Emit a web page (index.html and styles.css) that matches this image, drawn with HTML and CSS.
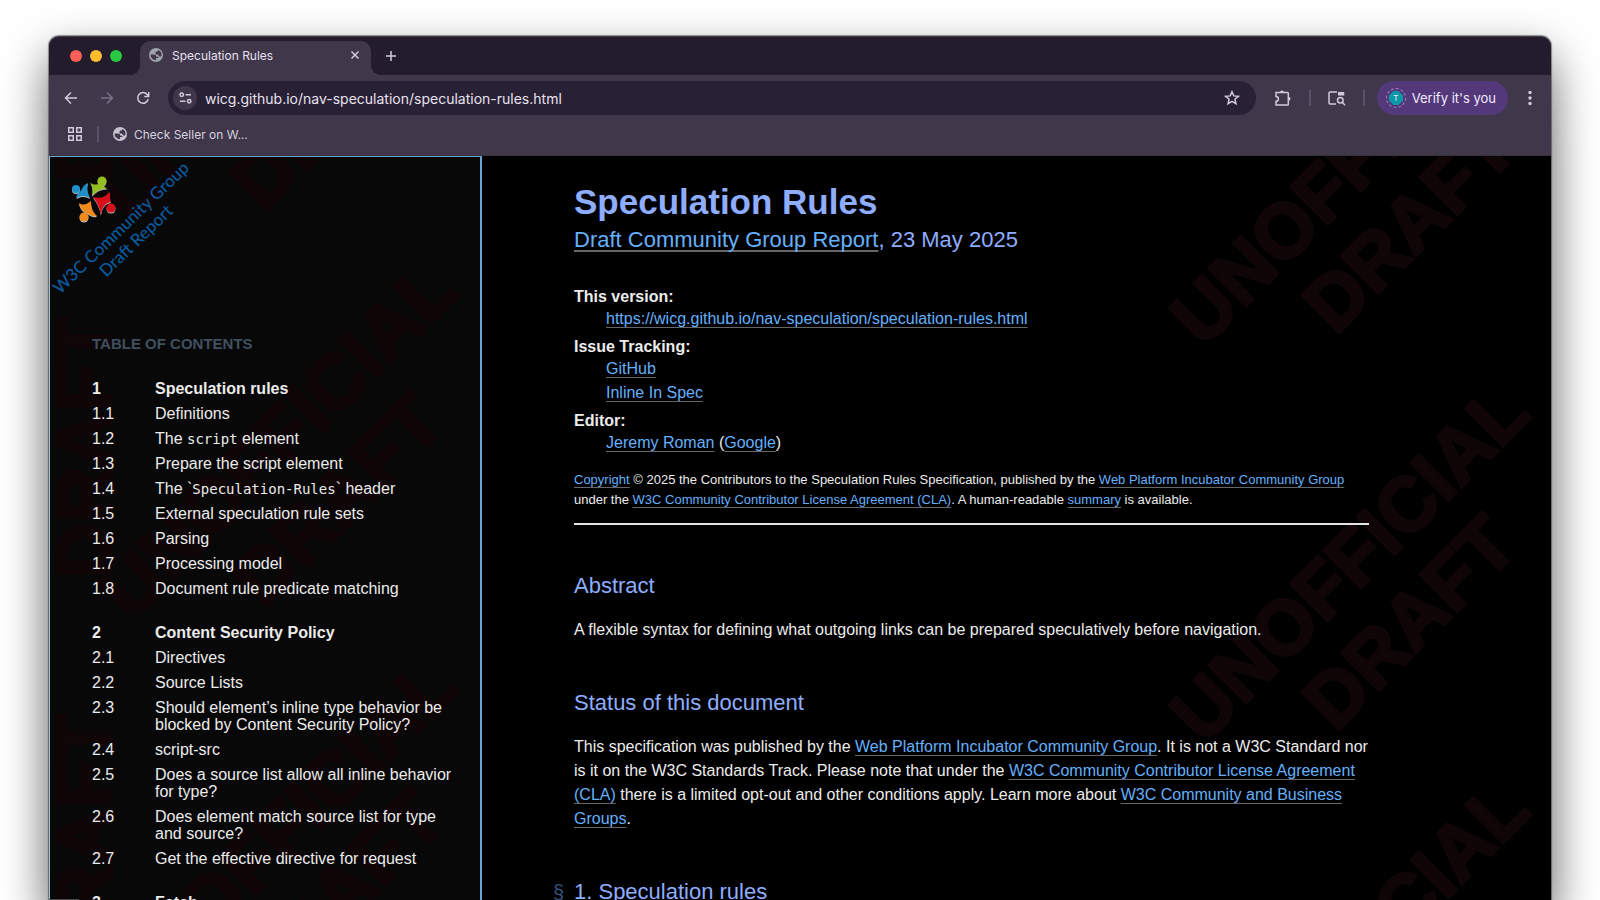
FILE: index.html
```html
<!DOCTYPE html>
<html lang="en">
<head>
<meta charset="utf-8">
<title>Speculation Rules</title>
<meta name="viewport" content="width=device-width, initial-scale=1">
<link rel="stylesheet" href="styles.css">
</head>
<body>
<svg class="defs" aria-hidden="true">
  <symbol id="globe" viewBox="0 0 20 20">
    <path fill-rule="evenodd" d="M10 0a10 10 0 1 0 0 20 10 10 0 0 0 0-20zM2.2 9.2h4.6c2.6 0 3.6 1.2 3.6 3.2h3v1.8h-3.4v3.4A7.9 7.9 0 0 1 2.2 9.2zM13.2 2.9a7.8 7.8 0 0 1 4.600 8.400c-.8 1-2 1.300-3.200.5-.8-.6-1.200-1.500-1.400-2.500H9.400V6.200c0-1 .6-1.300 1.600-1.300h1.200c.6 0 1-.6 1-2z"/>
  </symbol>
  <symbol id="mark" viewBox="0 0 400 397" overflow="visible">
    <text class="mark-text" text-anchor="middle" transform="translate(217 212) rotate(-45)">UNOFFICIAL</text>
    <text class="mark-text" text-anchor="middle" transform="translate(277 272) rotate(-45)">DRAFT</text>
  </symbol>
</svg>

<div class="window">
  <div class="tabstrip">
    <div class="lights"><span class="light red"></span><span class="light yellow"></span><span class="light green"></span></div>
    <div class="tab">
      <svg class="favicon dim" aria-hidden="true"><use href="#globe"/></svg>
      <span class="tab-title">Speculation Rules</span>
      <button class="icon-btn tab-close" aria-label="Close tab"><svg width="10" height="10" viewBox="0 0 10 10"><path d="M1.500 1.500l7 7M8.500 1.500l-7 7"/></svg></button>
    </div>
    <button class="icon-btn new-tab" aria-label="New tab"><svg width="12" height="12" viewBox="0 0 12 12"><path d="M6 1v10M1 6h10"/></svg></button>
  </div>

  <div class="toolbar">
    <div class="nav-buttons">
      <button class="icon-btn" aria-label="Back"><svg width="14" height="14" viewBox="0 0 14 14"><path d="M13 7H2M7 1.500L1.500 7 7 12.500"/></svg></button>
      <button class="icon-btn faded" aria-label="Forward"><svg width="14" height="14" viewBox="0 0 14 14"><path d="M1 7h11M7 1.500L12.500 7 7 12.500"/></svg></button>
      <button class="icon-btn" aria-label="Reload"><svg width="14" height="14" viewBox="0 0 14 14"><path d="M12.200 8.200A5.300 5.300 0 1 1 11.200 3.600L12.500 5M12.700 1v4.400H8.300"/></svg></button>
    </div>
    <div class="omnibox">
      <button class="site-info" aria-label="View site information"><svg width="13" height="12" viewBox="0 0 13 12"><circle cx="2.700" cy="2.700" r="1.700"/><path d="M6.500 2.700H12M1 9.300h5.500"/><circle cx="10.200" cy="9.300" r="1.700"/></svg></button>
      <input class="url" type="text" aria-label="Address" value="wicg.github.io/nav-speculation/speculation-rules.html">
      <button class="icon-btn" aria-label="Bookmark this tab"><svg width="16" height="16" viewBox="0 0 16 16"><path d="M8 1.700l1.800 4.200 4.600.4-3.500 3 1.100 4.500L8 11.400l-4 2.400 1.100-4.500-3.500-3 4.600-.4z"/></svg></button>
    </div>
    <div class="actions">
      <button class="icon-btn" aria-label="Extensions"><svg width="18" height="18" viewBox="0 0 18 18"><path d="M2 3.500h11.500a.8.800 0 0 1 .8.800v11a.8.800 0 0 1-.8.800H2v-3.800a2.300 2.300 0 0 0 0-4.800z"/><path class="solid" d="M6 3.500a2 2 0 0 1 4 0zM14.500 7.800a2 2 0 0 1 0 4z"/></svg></button>
      <span class="divider"></span>
      <button class="icon-btn" aria-label="Search this page"><svg width="18" height="16" viewBox="0 0 18 16"><path d="M8 14H2.200A1.200 1.200 0 0 1 1 12.800V3.200A1.200 1.200 0 0 1 2.200 2H9M14.300 12.300L17 15.200"/><circle cx="12.300" cy="10.300" r="2.800"/><path class="solid" d="M10 2h5.500a.8.800 0 0 1 .8.800V5.500H10z"/></svg></button>
      <span class="divider"></span>
      <button class="profile"><span class="avatar">T</span>Verify it's you</button>
      <button class="icon-btn menu" aria-label="Menu"><svg width="4" height="16" viewBox="0 0 4 16"><circle class="dot" cx="2" cy="2.500" r="1.700"/><circle class="dot" cx="2" cy="8" r="1.700"/><circle class="dot" cx="2" cy="13.500" r="1.700"/></svg></button>
    </div>
  </div>

  <div class="bookmarks">
    <button class="icon-btn" aria-label="All apps"><svg width="16" height="16" viewBox="0 0 16 16"><path d="M1.750 1.750h4.500v4.500h-4.500zM9.750 1.750h4.500v4.500h-4.500zM1.750 9.750h4.500v4.500h-4.500zM9.750 9.750h4.500v4.500h-4.500z"/></svg></button>
    <span class="divider"></span>
    <a class="bookmark" href="#seller"><svg class="favicon" aria-hidden="true"><use href="#globe"/></svg>Check Seller on W...</a>
  </div>

  <div class="page">
    <nav class="sidebar" aria-labelledby="toc-title">
      <svg class="marks marks-left" aria-hidden="true">
        <use href="#mark" x="29" y="-308" width="400" height="397"/>
        <use href="#mark" x="29" y="89" width="400" height="397"/>
        <use href="#mark" x="29" y="486" width="400" height="397"/>
        <g class="mark-text">
          <text text-anchor="middle" transform="translate(61 -106) rotate(-90)">DRAFT</text>
          <text text-anchor="middle" transform="translate(61 291) rotate(-90)">DRAFT</text>
          <text text-anchor="middle" transform="translate(61 688) rotate(-90)">DRAFT</text>
        </g>
      </svg>
      <a class="logo" href="#w3c" aria-label="W3C Community Group Draft Report">
        <svg width="150" height="150" viewBox="0 0 150 150">
          <g class="swirl">
            <g fill="#1d8fc9"><circle cx="26" cy="32" r="4"/><path d="M38 26c-2 6 0 10 2 15-4-2-8-3-13 0-1-2 0-3 1-5 4-1 4-8 10-10z"/></g>
            <g fill="#93c01f"><circle cx="52" cy="24" r="4.500"/><path d="M40 25c3 4 7 2 11 2 3 0 3 4 7 5-6-1-11 1-16 7 1-5 1-9-2-14z"/></g>
            <g fill="#d80f1a"><circle cx="61" cy="51" r="4.500"/><path d="M43 40c7 2 13 0 16-5 2 2 0 7 2 10-6 1-9 5-10 13-1-7-4-13-8-18z"/></g>
            <g fill="#f08a1c"><circle cx="34" cy="60" r="4.500"/><path d="M29 46c5 3 8 1 12-2 0 6 1 10 6 15-4 1-7-1-10-3-3-1-7-4-8-10z"/></g>
          </g>
          <g class="logo-text"><text text-anchor="middle" transform="translate(75 75) rotate(-44)">W3C Community Group</text>
          <text text-anchor="middle" transform="translate(90 88) rotate(-44)">Draft Report</text></g>
        </svg>
      </a>
      <h2 class="toc-title" id="toc-title">Table of Contents</h2>
      <ol class="toc">
        <li class="chapter"><a href="#s1"><span>1</span><span>Speculation rules</span></a></li>
        <li><a href="#s1-1"><span>1.1</span><span>Definitions</span></a></li>
        <li><a href="#s1-2"><span>1.2</span><span>The <code>script</code> element</span></a></li>
        <li><a href="#s1-3"><span>1.3</span><span>Prepare the script element</span></a></li>
        <li><a href="#s1-4"><span>1.4</span><span>The `<code>Speculation-Rules</code>` header</span></a></li>
        <li><a href="#s1-5"><span>1.5</span><span>External speculation rule sets</span></a></li>
        <li><a href="#s1-6"><span>1.6</span><span>Parsing</span></a></li>
        <li><a href="#s1-7"><span>1.7</span><span>Processing model</span></a></li>
        <li><a href="#s1-8"><span>1.8</span><span>Document rule predicate matching</span></a></li>
        <li class="chapter"><a href="#s2"><span>2</span><span>Content Security Policy</span></a></li>
        <li><a href="#s2-1"><span>2.1</span><span>Directives</span></a></li>
        <li><a href="#s2-2"><span>2.2</span><span>Source Lists</span></a></li>
        <li><a href="#s2-3"><span>2.3</span><span>Should element’s inline type behavior be blocked by Content Security Policy?</span></a></li>
        <li><a href="#s2-4"><span>2.4</span><span>script-src</span></a></li>
        <li><a href="#s2-5"><span>2.5</span><span>Does a source list allow all inline behavior for type?</span></a></li>
        <li><a href="#s2-6"><span>2.6</span><span>Does element match source list for type and source?</span></a></li>
        <li><a href="#s2-7"><span>2.7</span><span>Get the effective directive for request</span></a></li>
        <li class="chapter"><a href="#s3"><span>3</span><span>Fetch</span></a></li>
      </ol>
    </nav>

    <main class="content">
      <svg class="marks marks-right" aria-hidden="true">
        <use href="#mark" x="0" y="-184" width="400" height="397"/>
        <use href="#mark" x="0" y="213" width="400" height="397"/>
        <use href="#mark" x="0" y="610" width="400" height="397"/>
      </svg>
      <header>
        <h1>Speculation Rules</h1>
        <p class="subtitle"><a href="#report">Draft Community Group Report</a>, 23 May 2025</p>
        <dl>
          <dt>This version:</dt>
          <dd><a href="#version">https://wicg.github.io/nav-speculation/speculation-rules.html</a></dd>
          <dt>Issue Tracking:</dt>
          <dd><a href="#github">GitHub</a></dd>
          <dd><a href="#inline">Inline In Spec</a></dd>
          <dt>Editor:</dt>
          <dd><a href="#editor">Jeremy Roman</a> (<a href="#google">Google</a>)</dd>
        </dl>
        <p class="copyright"><a href="#copyright">Copyright</a> © 2025 the Contributors to the Speculation Rules Specification, published by the <a href="#wicg">Web Platform Incubator Community Group</a> under the <a href="#cla">W3C Community Contributor License Agreement (CLA)</a>. A human-readable <a href="#summary">summary</a> is available.</p>
        <hr>
      </header>
      <section>
        <h2>Abstract</h2>
        <p>A flexible syntax for defining what outgoing links can be prepared speculatively before navigation.</p>
      </section>
      <section>
        <h2>Status of this document</h2>
        <p>This specification was published by the <a href="#wicg2">Web Platform Incubator Community Group</a>. It is not a W3C Standard nor is it on the W3C Standards Track. Please note that under the <a href="#cla2">W3C Community Contributor License Agreement (CLA)</a> there is a limited opt-out and other conditions apply. Learn more about <a href="#groups">W3C Community and Business Groups</a>.</p>
      </section>
      <section>
        <h2 id="s1"><a class="self-link" href="#s1" aria-label="Link to this section">§</a>1. Speculation rules</h2>
      </section>
    </main>
    <div class="status-bubble"></div>
  </div>
</div>
</body>
</html>
```

FILE: styles.css
```css
* { box-sizing: border-box; }

body {
  display: flex;
  flex-direction: column;
  margin: 0;
  height: 100vh;
  overflow: hidden;
  background: #fff;
  font-family: "Liberation Sans", Arial, sans-serif;
  font-size: 16px;
}

.defs { position: absolute; width: 0; height: 0; }

.window {
  display: flex;
  flex: 1;
  flex-direction: column;
  min-height: 0;
  margin: 36px 49px 0;
  border-top: 1px solid #3e3c44;
  border-radius: 10px 10px 0 0;
  background: #40374b;
  box-shadow: 0 0 1px 1px rgba(0, 0, 0, 0.4), 0 20px 46px 0 rgba(0, 0, 0, 0.6), 0 80px 46px 0 rgba(0, 0, 0, 0.1);
  overflow: hidden;
  font-family: Inter, sans-serif;
}

/* Tab strip */
.tabstrip {
  display: flex;
  align-items: flex-end;
  flex: none;
  height: 38px;
  padding-left: 21px;
  background: #231c2d;
}
.lights { display: flex; gap: 8px; width: 70px; padding-bottom: 13px; }
.light { width: 12px; height: 12px; border-radius: 50%; }
.red { background: #ff5f57; }
.yellow { background: #febc2e; }
.green { background: #28c840; }

.tab {
  position: relative;
  display: flex;
  align-items: center;
  gap: 9px;
  width: 231px;
  height: 34px;
  padding: 0 11px 6px 9px;
  border-radius: 10px 10px 0 0;
  background: #40374b;
}
.tab::before, .tab::after {
  content: "";
  position: absolute;
  bottom: 0;
  width: 10px;
  height: 10px;
}
.tab::before { left: -10px; background: radial-gradient(circle at 0 0, transparent 10px, #40374b 10px); }
.tab::after { right: -10px; background: radial-gradient(circle at 100% 0, transparent 10px, #40374b 10px); }
.tab-title { flex: 1; color: #e6e0ee; font-size: 12px; }

.favicon { width: 14px; height: 14px; flex: none; fill: #c6c3cf; }
.favicon.dim { fill: #9fa3ab; }

.icon-btn {
  display: flex;
  align-items: center;
  justify-content: center;
  padding: 0;
  border: 0;
  background: none;
}
.icon-btn svg, .site-info svg { fill: none; stroke: #d3cade; stroke-width: 1.5; }
.icon-btn .dot, .icon-btn .solid { fill: #d3cade; stroke: none; }
.icon-btn.faded svg { stroke: #7a7088; }
.new-tab { width: 40px; height: 38px; }

/* Toolbar */
.toolbar { display: flex; flex: none; align-items: center; height: 46px; padding: 0 19px 0 15px; }
.nav-buttons { display: flex; gap: 22px; margin-right: 18px; }
.omnibox {
  display: flex;
  flex: 1;
  align-items: center;
  height: 34px;
  padding: 0 16px 0 5px;
  border-radius: 17px;
  background: #282034;
}
.site-info {
  display: flex;
  align-items: center;
  justify-content: center;
  width: 24px;
  height: 24px;
  padding: 0;
  border: 0;
  border-radius: 50%;
  background: #40374b;
}
.url {
  flex: 1;
  min-width: 0;
  padding: 0 0 0 8px;
  border: 0;
  outline: 0;
  background: none;
  color: #e8e3ef;
  font-family: Inter, sans-serif;
  font-size: 14px;
}
.actions { display: flex; align-items: center; gap: 17px; margin-left: 18px; }
.divider { width: 2px; height: 16px; background: #5b5168; }
.profile {
  display: flex;
  align-items: center;
  gap: 6px;
  height: 34px;
  margin-left: -5px;
  padding: 0 12px 0 9px;
  border: 0;
  border-radius: 17px;
  background: #54397a;
  color: #f1eaff;
  font-family: Inter, sans-serif;
  font-size: 13px;
}
.avatar {
  display: grid;
  place-items: center;
  width: 20px;
  height: 20px;
  border: 1px dashed #a98fd0;
  border-radius: 50%;
  background: radial-gradient(circle, #0a97a7 7px, transparent 7px);
  font-size: 8px;
}
.menu { margin-left: 3px; }

/* Bookmarks bar */
.bookmarks { display: flex; flex: none; align-items: center; gap: 14px; height: 34px; padding: 0 0 8px 18px; }
.bookmark { display: flex; align-items: center; gap: 7px; color: #d6d0df; font-size: 12px; text-decoration: none; }

/* Document */
.page {
  position: relative;
  display: flex;
  flex: 1;
  min-height: 0;
  overflow: hidden;
  border-top: 1px solid #34323a;
  background: #000;
  color: #ececec;
  font-family: "Liberation Sans", Arial, sans-serif;
}
.marks { position: absolute; top: 0; height: 100%; overflow: hidden; }
.marks-left { left: 0; width: 100%; }
.marks-right { right: 0; width: 400px; }
.mark-text {
  fill: #100507;
  stroke: #100507;
  stroke-width: 3px;
  font-family: "Liberation Sans", Arial, sans-serif;
  font-size: 77px;
  font-weight: 700;
}

.sidebar {
  position: relative;
  flex: none;
  width: 433px;
  padding: 0 20px 0 42px;
  border: 1px solid #6aa5d8;
  border-right-width: 2px;
  border-bottom: 0;
  border-left-color: #9dbfd4;
  background: #080808;
  overflow: hidden;
}
.sidebar > :not(.marks) { position: relative; }
.logo { display: block; width: 150px; height: 150px; margin-left: -42px; }
.logo svg { display: block; }
.swirl { filter: drop-shadow(0 1px 0 #b9b9b9); }
.logo-text { fill: #0b5a9f; font-family: Lato, sans-serif; font-size: 17px; font-weight: 500; }
.toc-title { margin: 27px 0 22px; color: #3f505f; font-size: 15px; line-height: 20px; text-transform: uppercase; }
.toc { margin: 0; padding: 0; list-style: none; line-height: 17px; }
.toc a { display: grid; grid-template-columns: 63px 1fr; padding: 4px 0; color: inherit; text-decoration: none; }
.toc code { font-family: "DejaVu Sans Mono", monospace; font-size: 14px; line-height: 1; }
.chapter { font-weight: 700; }
.toc li + .chapter { margin-top: 19px; }

.content {
  position: relative;
  flex: 1;
  min-width: 0;
  padding: 23px 182px 0 92px;
  overflow: hidden;
  line-height: 24px;
}
.content > :not(.marks) { position: relative; }
.content a { color: #64b0fc; text-decoration-color: #666; text-underline-offset: 3px; text-decoration-skip-ink: none; }
h1, .content h2, .subtitle { color: #8eadff; }
h1 { margin: 0; font-size: 35px; line-height: 45px; }
.subtitle { margin: 0 0 25px; font-size: 22px; line-height: 32px; }
.content h2 { margin: 0; font-size: 22px; font-weight: 400; line-height: 28px; }
.content .self-link { position: absolute; left: -21px; color: #34537e; font-size: 20px; text-decoration: none; }
dl { margin: 0; }
dt { padding-top: 6px; font-weight: 700; line-height: 20px; }
dd { margin-left: 32px; }
.copyright { margin: 15px 0 13px; font-size: 13px; line-height: 20px; }
hr { height: 2px; margin: 0; border: 0; background: #e4e4e4; }
section { padding-top: 47px; }
section p { margin: 18px 0 0; }

.status-bubble { position: absolute; left: 0; bottom: 0; width: 30px; height: 1px; background: #4b4b4b; }
```
